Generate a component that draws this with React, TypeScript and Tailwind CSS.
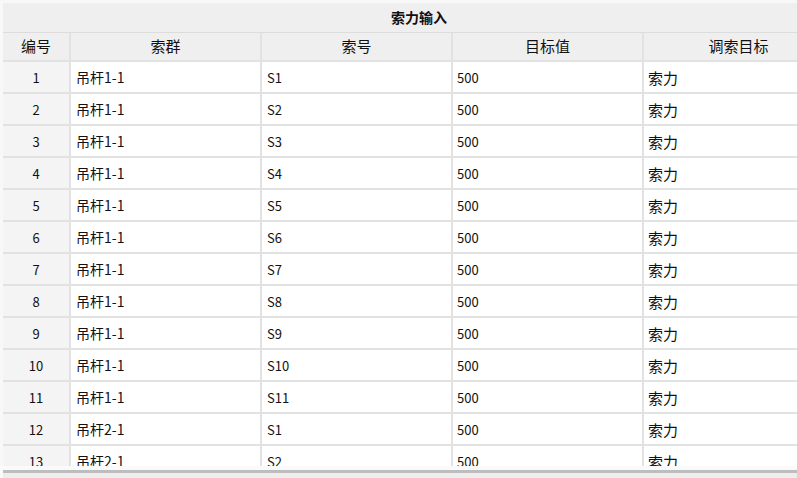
import React from 'react';

const rows = [
  { id: 1, group: '吊杆1-1', cable: 'S1' },
  { id: 2, group: '吊杆1-1', cable: 'S2' },
  { id: 3, group: '吊杆1-1', cable: 'S3' },
  { id: 4, group: '吊杆1-1', cable: 'S4' },
  { id: 5, group: '吊杆1-1', cable: 'S5' },
  { id: 6, group: '吊杆1-1', cable: 'S6' },
  { id: 7, group: '吊杆1-1', cable: 'S7' },
  { id: 8, group: '吊杆1-1', cable: 'S8' },
  { id: 9, group: '吊杆1-1', cable: 'S9' },
  { id: 10, group: '吊杆1-1', cable: 'S10' },
  { id: 11, group: '吊杆1-1', cable: 'S11' },
  { id: 12, group: '吊杆2-1', cable: 'S1' },
  { id: 13, group: '吊杆2-1', cable: 'S2' },
];

const cols = 'grid grid-cols-[68px_191px_191px_191px_191px]';

export default function App() {
  return (
    <div
      className="w-[797px] h-[478px] overflow-hidden bg-[#f8f8f8] flex flex-col pt-[3px] text-[#111]"
      style={{ fontFamily: '"Noto Sans CJK SC", "Liberation Sans", sans-serif' }}
    >
      <div className="pl-[3px] h-[463px] overflow-hidden">
        <div className="w-[832px]">
          {/* 标题 */}
          <div className="h-[30px] bg-[#efefef] border-b border-[#dcdcdc] flex items-center justify-center text-[14px] font-bold">
            索力输入
          </div>

          {/* 表头 */}
          <div className={`${cols} h-[29px] bg-[#efefef] text-[15px]`}>
            {['编号', '索群', '索号', '目标值', '调索目标'].map((h) => (
              <div key={h} className="flex items-center justify-center border-r-2 border-b-2 border-[#e2e2e2]">
                {h}
              </div>
            ))}
          </div>

          {/* 数据 */}
          {rows.map((r) => (
            <div key={r.id} className={`${cols} h-[32px] text-[14px] leading-none`}>
              <div className="flex items-center justify-center bg-[#f4f4f4] border-r-2 border-b-2 border-[#e2e2e2] text-[13px]">
                {r.id}
              </div>
              <div className="flex items-center pl-[5px] bg-white border-r-2 border-b-2 border-[#e2e2e2]">
                {r.group}
              </div>
              <div className="flex items-center pl-[5px] bg-white border-r-2 border-b-2 border-[#e2e2e2] text-[13px]">
                {r.cable}
              </div>
              <div className="flex items-center pl-[4px] bg-white border-r-2 border-b-2 border-[#e2e2e2] text-[13px]">
                500
              </div>
              <div className="flex items-center pl-[4px] bg-white border-r-2 border-b-2 border-[#e2e2e2] text-[15px]">
                索力
              </div>
            </div>
          ))}
        </div>
      </div>

      {/* 横向滚动条 */}
      <div className="h-[12px] pl-[3px] pt-[4px] bg-[#fafafa]">
        <div className="h-[8px] bg-[#eeeeee]">
          <div className="h-[3px] bg-[#bdbdbd]" />
        </div>
      </div>
    </div>
  );
}
